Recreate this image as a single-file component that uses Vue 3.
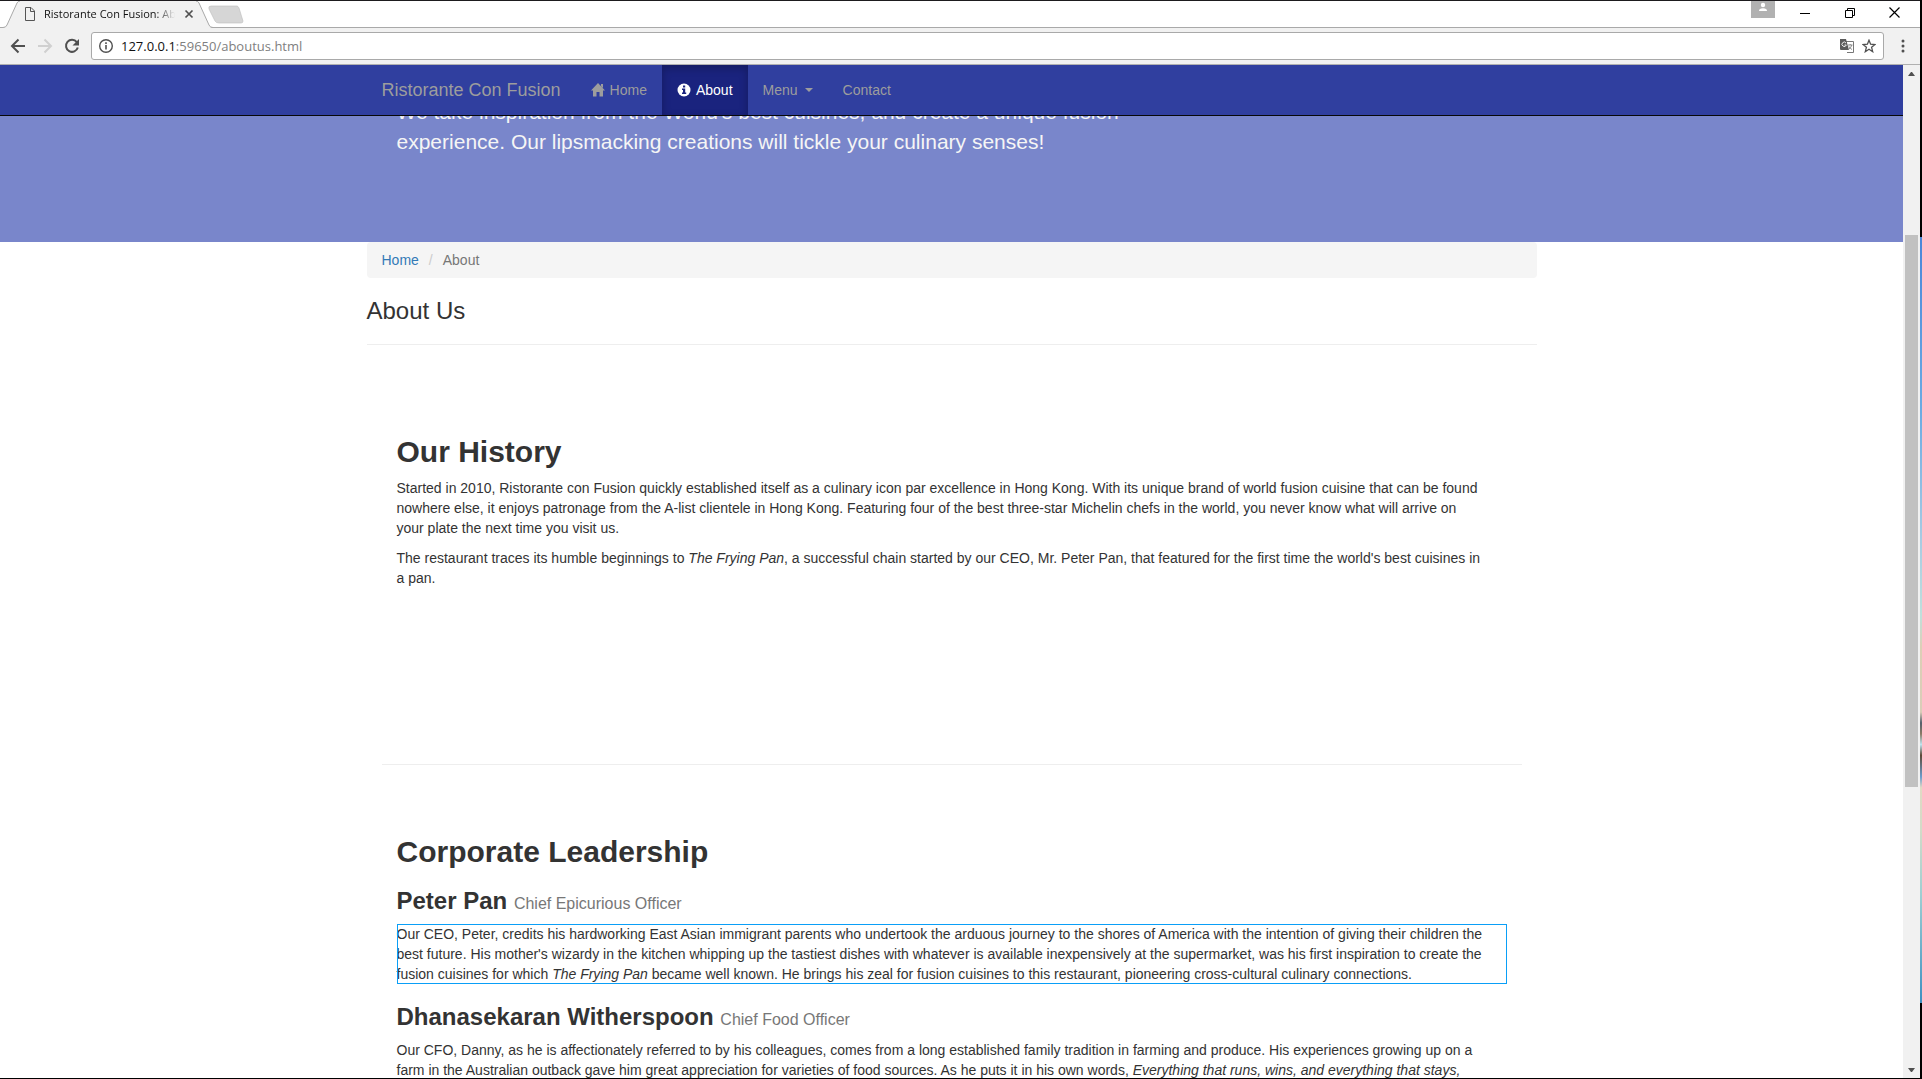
<script setup>
const links = [
  { label: 'Home', icon: 'home' },
  { label: 'About', icon: 'info', active: true },
  { label: 'Menu', caret: true },
  { label: 'Contact' },
]
</script>

<template>
  <div class="desktop">
    <div class="window">
      <header class="tabstrip">
        <svg class="tab-shape" width="250" height="27" viewBox="0 0 250 27" aria-hidden="true">
          <path d="M0 27V26.500H3Q6 26.500 7 24L17 2Q18 0 20 0H196Q198 0 199 2L209 24Q210 27 213 27Z" fill="#f1f1f1" />
          <path d="M0 26.500H3Q6 26.500 7 24L17 2Q18 0 20 0M196 0Q198 0 199 2L209 24Q210 26.500 213 26.500H250" fill="none" stroke="#a9a9a9" />
          <path d="M211 5H237Q238 5 239 7L243 20Q243 22 241 22H219Q216 22 215 20L209 8Q208 5 211 5Z" fill="#d6d6d6" stroke="#bcbcbc" stroke-width=".6" />
        </svg>
        <div class="tab">
          <svg width="12" height="14" viewBox="0 0 12 14" fill="none" stroke="#555" aria-hidden="true"><path d="M1.500 .5H7L10.500 4V13.500H1.500ZM6.500 .5V4.500H10.500" /></svg>
          <span class="tab-title">Ristorante Con Fusion: About</span>
          <button class="bare" aria-label="Close tab">
            <svg width="10" height="10" viewBox="0 0 10 10" stroke="#505050" stroke-width="1.700"><path d="M1.500 1.500L8.500 8.500M8.500 1.500L1.500 8.500" /></svg>
          </button>
        </div>
        <div class="controls">
          <button class="profile" aria-label="Profile">
            <svg width="24" height="17" viewBox="0 0 24 17" fill="#fff"><circle cx="12" cy="4" r="2.200" /><path d="M8 10Q8 7.300 12 7.300Q16 7.300 16 10Z" /></svg>
          </button>
          <button class="bare control" aria-label="Minimize"><svg width="10" height="10" viewBox="0 0 10 10" stroke="#000"><path d="M0 5.500H10" /></svg></button>
          <button class="bare control" aria-label="Restore"><svg width="10" height="10" viewBox="0 0 10 10" fill="none" stroke="#000"><path d="M.5 2.500H7.500V9.500H.5ZM2.500 2.500V.5H9.500V7.500H7.500" /></svg></button>
          <button class="bare control" aria-label="Close"><svg width="11" height="11" viewBox="0 0 11 11" stroke="#000" stroke-width="1.200"><path d="M.5 .5L10.500 10.500M10.500 .5L.5 10.500" /></svg></button>
        </div>
      </header>

      <div class="toolbar">
        <button class="bare" aria-label="Back"><svg width="16" height="16" viewBox="0 0 16 16" fill="none" stroke="#505050" stroke-width="2"><path d="M15 8H2.500M8.500 1.500L2 8L8.500 14.500" /></svg></button>
        <button class="bare" aria-label="Forward"><svg width="16" height="16" viewBox="0 0 16 16" fill="none" stroke="#d0d0d0" stroke-width="2"><path d="M1 8H13.500M7.500 1.500L14 8L7.500 14.500" /></svg></button>
        <button class="bare" aria-label="Reload"><svg width="16" height="16" viewBox="0 0 16 16" fill="none" stroke="#505050" stroke-width="2"><path d="M12.800 4.200A6 6 0 1 0 13.800 9.500" /><path d="M15 1V7.500H8.500Z" fill="#505050" stroke="none" /></svg></button>
        <div class="address">
          <svg width="14" height="14" viewBox="0 0 14 14" fill="none" stroke="#505050" aria-hidden="true"><circle cx="7" cy="7" r="6.300" stroke-width="1.400" /><path d="M7 6V10.500M7 3.300V5" stroke-width="1.600" /></svg>
          <span class="url"><b>127.0.0.1</b>:59650/aboutus.html</span>
          <button class="bare" aria-label="Translate">
            <svg width="14" height="14" viewBox="0 0 14 14"><path d="M5 2.500H13.500V13.500H7" fill="#fff" stroke="#777" /><path d="M0 0H6L9 11H1Q0 11 0 10Z" fill="#5a5a5a" /><path d="M6 4A2.200 2.200 0 1 0 6.300 6H4.500" fill="none" stroke="#eee" /><path d="M8 6H12.500M10.200 5V6M11.800 6Q11 9 8.500 10.500M9 7.500Q10 9.500 12 10.500" fill="none" stroke="#888" /></svg>
          </button>
          <button class="bare" aria-label="Bookmark"><svg width="14" height="14" viewBox="0 0 14 14" fill="none" stroke="#505050" stroke-width="1.300"><path d="M7 1.200L8.600 5.200L13 5.500L9.600 8.300L10.700 12.700L7 10.300L3.300 12.700L4.400 8.300L1 5.500L5.400 5.200Z" /></svg></button>
        </div>
        <button class="bare dots" aria-label="Menu"><svg width="4" height="14" viewBox="0 0 4 14" fill="#505050"><circle cx="2" cy="2" r="1.500" /><circle cx="2" cy="7" r="1.500" /><circle cx="2" cy="12" r="1.500" /></svg></button>
      </div>

      <div class="viewport">
        <div class="page">
          <nav class="navbar">
            <div class="container nav-row">
              <a class="brand" href="#">Ristorante Con Fusion</a>
              <a v-for="link in links" :key="link.label" href="#" :class="['nav-link', { active: link.active }]">
                <svg v-if="link.icon === 'home'" width="14" height="14" viewBox="0 0 14 14" fill="currentColor" aria-hidden="true"><path d="M7 0L14 7.500H12V13.500H8.500V9H5.500V13.500H2V7.500H0ZM10 1H12V5L10 3Z" /></svg>
                <svg v-if="link.icon === 'info'" width="14" height="14" viewBox="0 0 14 14" aria-hidden="true"><circle cx="7" cy="7" r="6.500" fill="currentColor" /><path d="M6 2.500H8.200V4.400H6ZM5 5.500H8.200V9.500H9.200V11H5V9.500H6V7H5Z" fill="#1a237e" /></svg>
                <span>{{ link.label }}</span>
                <i v-if="link.caret" class="caret"></i>
              </a>
            </div>
          </nav>

          <section class="hero">
            <div class="container">
              <p>We take inspiration from the World's best cuisines, and create a unique fusion experience. Our lipsmacking creations will tickle your culinary senses!</p>
            </div>
          </section>

          <main class="container">
            <ol class="breadcrumb">
              <li><a href="#">Home</a></li>
              <li>About</li>
            </ol>
            <h3 class="page-title">About Us</h3>

            <section class="block">
              <h2>Our History</h2>
              <p>Started in 2010, Ristorante con Fusion quickly established itself as a culinary icon par excellence in Hong Kong. With its unique brand of world fusion cuisine that can be found nowhere else, it enjoys patronage from the A-list clientele in Hong Kong. Featuring four of the best three-star Michelin chefs in the world, you never know what will arrive on your plate the next time you visit us.</p>
              <p>The restaurant traces its humble beginnings to <em>The Frying Pan</em>, a successful chain started by our CEO, Mr. Peter Pan, that featured for the first time the world's best cuisines in a pan.</p>
            </section>

            <section class="block leadership">
              <h2>Corporate Leadership</h2>
              <h3>Peter Pan <small>Chief Epicurious Officer</small></h3>
              <p class="selected">Our CEO, Peter, credits his hardworking East Asian immigrant parents who undertook the arduous journey to the shores of America with the intention of giving their children the best future. His mother's wizardy in the kitchen whipping up the tastiest dishes with whatever is available inexpensively at the supermarket, was his first inspiration to create the fusion cuisines for which <em>The Frying Pan</em> became well known. He brings his zeal for fusion cuisines to this restaurant, pioneering cross-cultural culinary connections.</p>
              <h3>Dhanasekaran Witherspoon <small>Chief Food Officer</small></h3>
              <p>Our CFO, Danny, as he is affectionately referred to by his colleagues, comes from a long established family tradition in farming and produce. His experiences growing up on a farm in the Australian outback gave him great appreciation for varieties of food sources. As he puts it in his own words, <em>Everything that runs, wins, and everything that stays,</em></p>
            </section>
          </main>
        </div>

        <div class="scrollbar" aria-hidden="true">
          <i class="arrow up"></i>
          <div class="track"><div class="thumb"></div></div>
          <i class="arrow down"></i>
        </div>
      </div>
    </div>
    <div class="wallpaper"></div>
  </div>
</template>

<style>
body {
  margin: 0;
  overflow: hidden;
}
</style>

<style scoped>
* {
  box-sizing: border-box;
}
.desktop {
  display: flex;
  height: 100vh;
  overflow: hidden;
  color: #333;
  font: 14px/20px "Liberation Sans", Arial, sans-serif;
}
.window {
  display: flex;
  flex: 1;
  flex-direction: column;
  min-width: 0;
  border-top: 1px solid #1d1b1e;
  border-bottom: 1px solid #000;
  background: #fff;
}
.wallpaper {
  width: 2px;
  background: linear-gradient(#000 22%, #4a86d8 22%, #6cabe2 38%, #a8cbe2 50%, #bfe0dc 57%, #dccfb6 60%, #d9cdb8 66%, #54606c 67%, #8a7a66 68%, #bfe4ee 69%, #5d4a38 70%, #6c9ccb 72%, #e0dac4 73%, #d2dbc8 77%, #9dced2 83%, #3d8fc0 93%, #000 93%);
}
.bare {
  display: inline-flex;
  align-items: center;
  justify-content: center;
  padding: 0;
  border: 0;
  background: none;
}
svg {
  display: block;
  flex: none;
}

/* Browser frame */
.tabstrip {
  position: relative;
  display: flex;
  justify-content: space-between;
  flex: none;
  height: 27px;
  border-bottom: 1px solid #a9a9a9;
}
.tab-shape {
  position: absolute;
  top: 0;
  left: 0;
}
.tab {
  position: relative;
  display: flex;
  align-items: center;
  width: 196px;
  padding-left: 24px;
  font: 11px/16px "Open Sans", "Noto Sans", sans-serif;
  color: #111;
}
.tab-title {
  width: 133px;
  margin: 0 7px 0 8px;
  overflow: hidden;
  white-space: nowrap;
  mask-image: linear-gradient(90deg, #000 112px, transparent 131px);
}
.controls {
  display: flex;
  align-items: flex-start;
  padding-right: 3px;
}
.profile {
  height: 17px;
  margin-right: 7px;
  padding: 0;
  border: 0;
  background: #b1b1b1;
}
.control {
  width: 45px;
  height: 23px;
}
.toolbar {
  display: flex;
  align-items: center;
  flex: none;
  gap: 11px;
  height: 37px;
  padding: 0 15px 0 10px;
  border-bottom: 1px solid #b0b0b0;
  background: #f1f1f1;
}
.address {
  display: flex;
  align-items: center;
  flex: 1;
  gap: 8px;
  height: 28px;
  padding: 0 7px;
  border: 1px solid #a9a9a9;
  border-radius: 3px;
  background: #fff;
}
.url {
  flex: 1;
  color: #808080;
  font: 13px/18px "Open Sans", "Noto Sans", sans-serif;
}
.url b {
  color: #111;
  font-weight: 400;
}
.dots {
  margin-left: 6px;
}
.viewport {
  display: flex;
  flex: 1;
  min-height: 0;
}
.page {
  position: relative;
  flex: 1;
  min-width: 0;
  overflow: hidden;
}
.scrollbar {
  display: flex;
  flex-direction: column;
  width: 17px;
  background: #f1f1f1;
}
.arrow {
  height: 17px;
  background: #505050;
}
.up {
  clip-path: polygon(5px 11px, 12px 11px, 9px 7px, 8px 7px);
}
.down {
  clip-path: polygon(5px 7px, 12px 7px, 9px 11px, 8px 11px);
}
.track {
  display: flex;
  flex: 1;
  flex-direction: column;
  padding: 0 2px;
}
.track::before {
  flex: 153;
  content: "";
}
.track::after {
  flex: 274;
  content: "";
}
.thumb {
  flex: 552;
  background: #c1c1c1;
}

/* Site */
.container {
  max-width: 1170px;
  margin: 0 auto;
}
.navbar {
  position: absolute;
  z-index: 1;
  top: 0;
  right: 0;
  left: 0;
  border-bottom: 1px solid #080808;
  background: #303f9f;
}
.nav-row {
  display: flex;
  height: 50px;
}
.nav-row a {
  display: flex;
  align-items: center;
  padding: 0 15px;
  color: #9d9d9d;
  text-decoration: none;
}
.nav-row .brand {
  font-size: 18px;
}
.nav-row .nav-link {
  gap: 5px;
}
.nav-row .active {
  background: #1a237e;
  box-shadow: inset 0 3px 9px rgba(0, 0, 0, .25);
  color: #fff;
}
.caret {
  margin-left: 2px;
  border: 4px solid transparent;
  border-top-color: currentColor;
  border-bottom: 0;
}
.hero {
  padding: 32px 0 85px;
  background: #7986cb;
  color: #f5f5f5;
}
.hero p {
  max-width: 790px;
  margin: 0;
  padding: 0 30px;
  font-size: 21px;
  line-height: 30px;
}
.breadcrumb {
  display: flex;
  margin: 0;
  padding: 8px 15px;
  border-radius: 4px;
  background: #f5f5f5;
  color: #777;
  list-style: none;
}
.breadcrumb li + li::before {
  padding: 0 10px;
  color: #ccc;
  content: "/";
}
.breadcrumb a {
  color: #337ab7;
  text-decoration: none;
}
h2,
h3 {
  margin: 0;
}
h2 {
  font-size: 30px;
  line-height: 33px;
}
h3 {
  margin: 20px 0 10px;
  font-size: 24px;
  line-height: 26px;
}
.page-title {
  margin: 0;
  padding: 20px 0;
  border-bottom: 1px solid #eee;
  font-weight: 400;
}
small {
  color: #777;
  font-size: 16px;
  font-weight: 400;
  line-height: 16px;
}
p {
  margin: 10px 0;
}
.block {
  min-height: 419px;
  margin: 0 15px;
  padding: 90px 15px 0;
}
.block p {
  padding-right: 22px;
}
.leadership {
  padding-top: 70px;
  border-top: 1px solid #eee;
}
.selected {
  outline: 1px solid #0a9ff7;
  outline-offset: -1px;
}
</style>
